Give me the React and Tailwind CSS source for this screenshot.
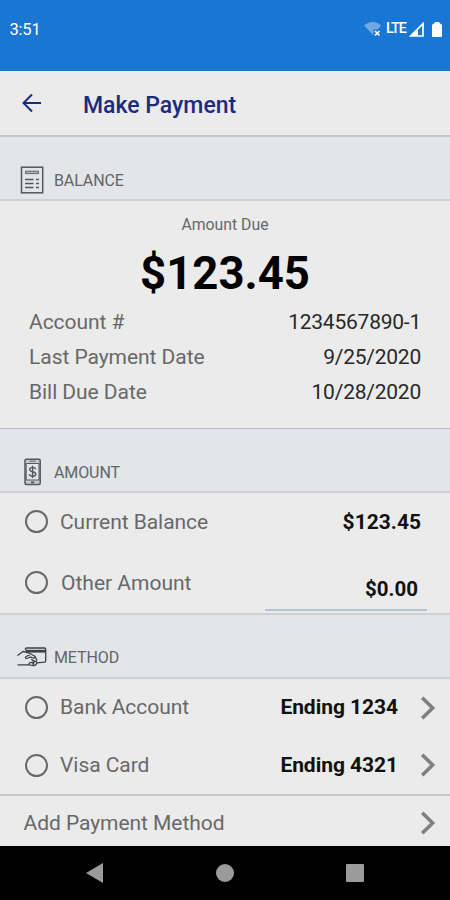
import React from 'react';

const BalanceIcon = () => (
  <svg className="w-6 h-7 shrink-0" viewBox="0 0 24 28" fill="none" stroke="#55575a">
    <rect x="1.5" y="1.2" width="21.2" height="25.6" strokeWidth="1.5" />
    <path d="M5.500 5.200h13v2.400h-13z" strokeWidth="0.900" fill="#b5b6b8" />
    <path d="M5 13.500h8.500M5 17.500h8.500M5 21.500h8.500" strokeWidth="1.500" />
    <path d="M16 13.500h3M16 17.500h3M16 21.500h3" strokeWidth="1.500" />
  </svg>
);

const AmountIcon = () => (
  <svg className="w-6 h-7 shrink-0" viewBox="0 0 24 28" fill="none" stroke="#55575a">
    <rect x="5" y="1.2" width="15.2" height="25.2" rx="1.2" strokeWidth="1.5" fill="#c9cacc" />
    <path d="M6.200 5.500h12.800v16.500H6.200z" fill="#e3e5e9" strokeWidth="1" />
    <path d="M9.500 3.200h6" strokeWidth="0.900" />
    <path d="M11 24.300h3.200" strokeWidth="1.700" />
    <path
      d="M15.700 11.200c-.4-1.300-1.600-1.800-3.100-1.800-1.700 0-2.900.8-2.900 2.100 0 3.100 6.100 1.400 6.100 4.600 0 1.400-1.300 2.200-3.100 2.200-1.800 0-3.100-.7-3.400-2.200M12.600 7.700v12.200"
      strokeWidth="1.400"
    />
  </svg>
);

const MethodIcon = () => (
  <svg className="w-[30px] h-5 shrink-0" viewBox="0 0 30 20" fill="none" stroke="#3f4144" strokeLinecap="round" strokeLinejoin="round">
    <path d="M8.500 3V1.800q0-.8.8-.8h18.200q1.200 0 1.200 1.200v11.500q0 1.300-1.200 1.500l-8 .6" strokeWidth="1.300" />
    <path d="M9 4.200h19.500" strokeWidth="2.800" strokeLinecap="butt" />
    <path d="M.8 8.200 6 4.500l5.500 1.300 6 3.200c1.500 1.200.2 2.500-1.300 2l-2.700-.9" strokeWidth="1.300" />
    <path d="m13.500 10-3.200 1.300c-2.200.7-2.600-1.300-.8-2.100l2.800-1.100" strokeWidth="1.200" />
    <path d="m17.800 9.400 1.800 3c.7 1.500-.5 2.500-1.700 1.800l-3.200-1.700M14.800 12.500l1.900 1.700c.8 1.300-.5 2.200-1.600 1.600" strokeWidth="1.200" />
    <path d="M1 17.800h11c2 0 2.500 1 4.200.8 2.200-.2 3.500-1.300 3.500-3.200M12 17.300c.3-1.600 1.700-2.300 3.600-1.800 1.400.4 1.300 1.700.4 2" strokeWidth="1.300" />
  </svg>
);

const Chevron = () => (
  <svg className="w-4 h-6 shrink-0" viewBox="0 0 16 24" fill="none" stroke="#808080" strokeWidth="3.6">
    <path d="M2.200 1.800 12.600 12 2.200 22.200" />
  </svg>
);

const Radio = () => <span className="w-[23px] h-[23px] shrink-0 rounded-full border-2 border-[#686868]" />;

const SectionHeader = ({ icon, title, className }) => (
  <div className={`flex border-b-2 border-[#cfd0d2] bg-[#e3e5e9] ${className}`}>
    <div className="flex h-7 w-[54px] shrink-0 items-center justify-center pl-2.5">{icon}</div>
    <h2 className="text-[16px] leading-[29px] tracking-[-0.1px] text-[#626467]">{title}</h2>
  </div>
);

const details = [
  { label: 'Account #', value: '1234567890-1' },
  { label: 'Last Payment Date', value: '9/25/2020' },
  { label: 'Bill Due Date', value: '10/28/2020' },
];

const App = () => {
  return (
    <div className="flex h-[900px] w-[450px] flex-col overflow-hidden bg-[#ebebeb] font-['Roboto',sans-serif] text-[#686868]">
      {/* Status bar */}
      <div className="flex h-[71px] shrink-0 justify-between bg-[#1976d2] pl-[9.5px] pr-2 pt-[17px] text-white">
        <span className="text-[16.5px] leading-[25px] tracking-[-0.2px]">3:51</span>
        <div className="flex h-6 items-center">
          <svg className="h-[17px] w-[18px]" viewBox="0 0 18 17">
            <path d="M0 4.500C5-.2 12.500-.2 17 4.500L9 14z" fill="#6fa9e5" />
            <path d="M9.500 8.500h7v7h-7z" fill="#1976d2" />
            <path d="m11 10 4.500 4.500m0-4.500-4.500 4.500" stroke="#fff" strokeWidth="1.700" />
          </svg>
          <span className="ml-1 text-[14.5px] font-medium leading-6 tracking-[-1px]">LTE</span>
          <svg className="ml-[3px] h-[15px] w-[15px]" viewBox="0 0 15 15">
            <path d="M14 1.700V14H1.700z" fill="none" stroke="#fff" strokeWidth="1.700" />
            <path d="M9 6.500V14H1.500z" fill="#fff" />
          </svg>
          <svg className="ml-2 h-[15px] w-2.5" viewBox="0 0 10 15" fill="#fff">
            <path d="M3 0h4l1 1.500q2 .6 2 2V14q0 1-1 1H1q-1 0-1-1V3.500q0-1.400 2-2z" />
          </svg>
        </div>
      </div>

      {/* Title bar */}
      <header className="flex h-[66px] shrink-0 items-center border-b-2 border-[#c6c6c8] pl-[22px] text-[#1b2a83]">
        <svg className="h-5 w-5" viewBox="0 0 20 20" fill="none" stroke="currentColor" strokeWidth="2">
          <path d="M19 10H2M10 1.500 1.500 10l8.500 8.500" />
        </svg>
        <h1 className="ml-[41px] pt-[5px] text-[23px] font-medium leading-8">Make Payment</h1>
      </header>

      <SectionHeader className="h-16 shrink-0 pt-[29px]" title="BALANCE" icon={<BalanceIcon />} />

      <section className="h-[227px] shrink-0">
        <p className="pt-3 text-center text-[15.8px] leading-6">Amount Due</p>
        <p className="text-center text-[45.5px] font-bold leading-[74px] text-black">$123.45</p>
        <dl className="-mt-1.5 pl-[29px] pr-[29px] text-[21px]">
          {details.map((row) => (
            <div key={row.label} className="flex h-[35px] items-center justify-between">
              <dt className="tracking-[-0.05px]">{row.label}</dt>
              <dd className="tracking-[-0.23px] text-[#282828]">{row.value}</dd>
            </div>
          ))}
        </dl>
      </section>

      <SectionHeader className="h-[65px] shrink-0 border-t border-t-[#b9babb] pt-[29px]" title="AMOUNT" icon={<AmountIcon />} />

      <section className="h-[120px] shrink-0 text-[21px]">
        <div className="flex h-[57px] items-center pl-[25px] pr-[29px]">
          <Radio />
          <span className="ml-3 pt-0.5 tracking-[-0.05px]">Current Balance</span>
          <span className="ml-auto pt-0.5 font-bold text-[#111]">$123.45</span>
        </div>
        <div className="flex h-[63px] pl-[25px] pr-[23px]">
          <div className="flex h-[65px] items-center">
            <Radio />
            <span className="ml-[13px] pt-[3px]">Other Amount</span>
          </div>
          <div className="ml-auto h-[61px] w-[162px] border-b-2 border-[#b4c3d5] pr-[9px] pt-[23px] text-right text-[20.5px] font-bold leading-8 text-[#111]">
            $0.00
          </div>
        </div>
      </section>

      <SectionHeader className="h-[66px] shrink-0 border-t-2 border-t-[#cfd0d2] pt-[28px]" title="METHOD" icon={<MethodIcon />} />

      <section className="shrink-0 text-[21px]">
        <div className="flex h-[57px] items-center pl-[25px] pr-3.5">
          <Radio />
          <span className="ml-3 pt-px tracking-[-0.05px]">Bank Account</span>
          <span className="ml-auto mr-[22px] pt-px font-bold tracking-[-0.05px] text-[#111]">Ending 1234</span>
          <Chevron />
        </div>
        <div className="flex h-[58px] items-center pl-[25px] pr-3.5">
          <Radio />
          <span className="ml-3 pt-px tracking-[-0.05px]">Visa Card</span>
          <span className="ml-auto mr-[22px] pt-0.5 font-bold tracking-[-0.05px] text-[#111]">Ending 4321</span>
          <Chevron />
        </div>
        <div className="flex h-[52px] items-center justify-between border-t-2 border-[#c8c8c8] pl-[23.5px] pr-3.5 pt-1">
          <span className="pt-0.5 tracking-[-0.05px]">Add Payment Method</span>
          <Chevron />
        </div>
      </section>

      {/* Android navigation */}
      <nav className="flex flex-1 items-center justify-between bg-black pl-[86px] pr-[86px]">
        <svg className="h-5 w-[17px]" viewBox="0 0 17 20" fill="#9b9b9b">
          <path d="M17 0v20L0 10z" />
        </svg>
        <span className="h-[18px] w-[18px] rounded-full bg-[#9b9b9b]" />
        <span className="h-[18px] w-[18px] rounded-[1px] bg-[#9b9b9b]" />
      </nav>
    </div>
  );
};

export default App;
